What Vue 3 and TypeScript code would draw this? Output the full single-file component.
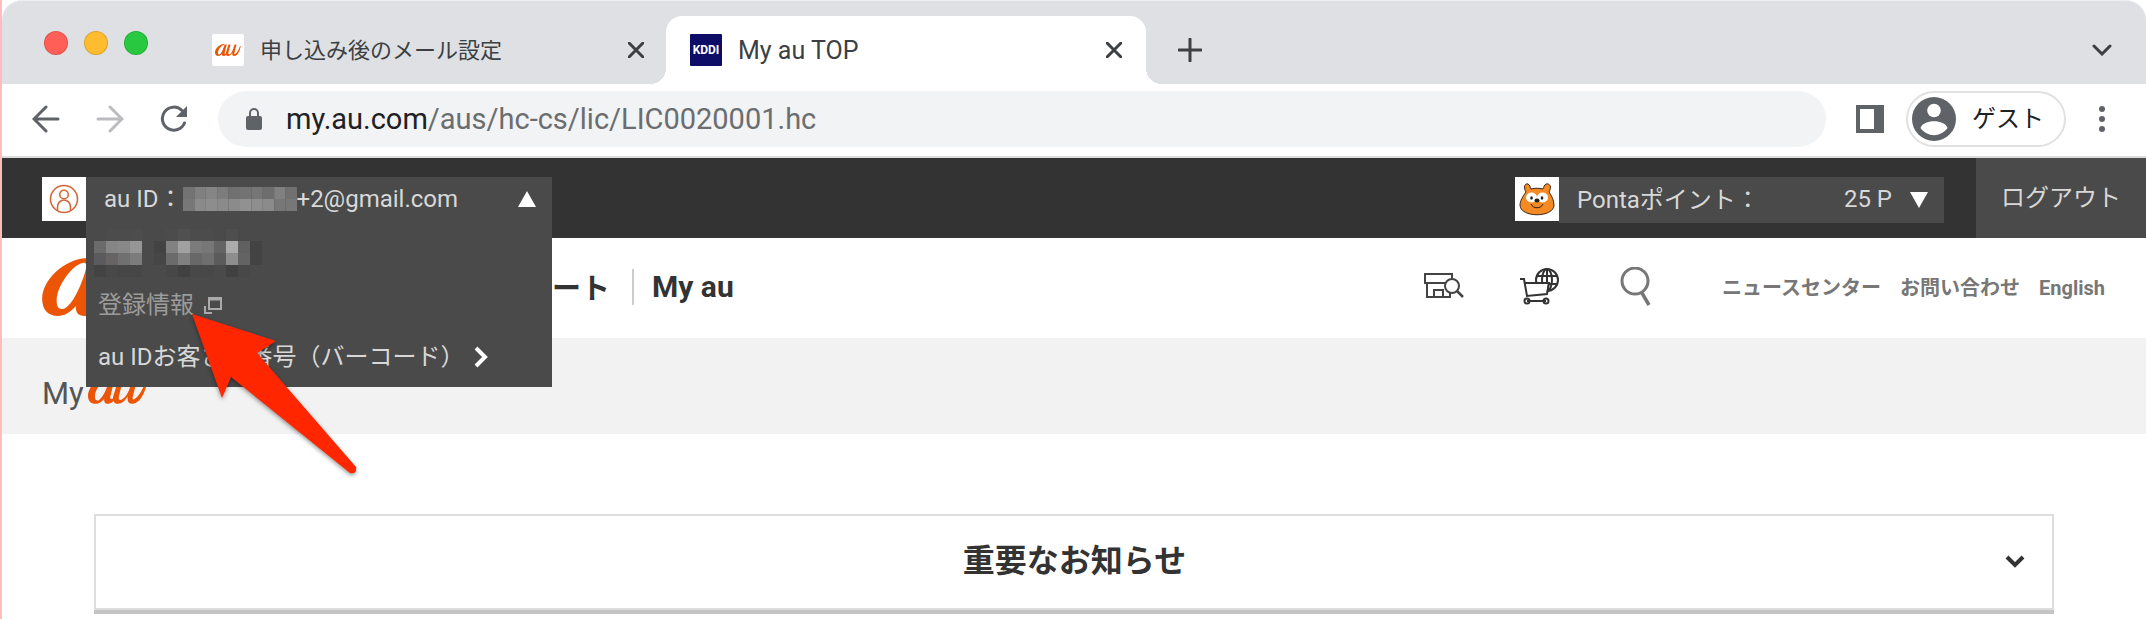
<script setup lang="ts">
import { ref } from 'vue'

const address = ref({ host: 'my.au.com', path: '/aus/hc-cs/lic/LIC0020001.hc' })
const links = ['ニュースセンター', 'お問い合わせ', 'English']

interface Mosaic { width: number; height: number; cells: string[] }
const mailMask: Mosaic = {
  width: 10,
  height: 2,
  cells: [
    '#737373', '#808080', '#858585', '#7c7c7c', '#707070', '#737373', '#767676', '#6d6d6d', '#808080', '#707070',
    '#777777', '#8a8a8a', '#8d8d8d', '#8b8b8b', '#8b8b8b', '#919191', '#8e8e8e', '#8b8b8b', '#777777', '#777777',
  ],
}
const nameMask: Mosaic = {
  width: 14,
  height: 4,
  cells: [
    '#4a4a4a', '#4c4c4c', '#4c4c4c', '#4d4d4d', '#4a4a4a', '#4a4a4a', '#4c4c4c', '#505050', '#4c4c4c', '#4c4c4c', '#4a4a4a', '#4e4e4e', '#4a4a4a', '#4a4a4a',
    '#6b6b6b', '#858585', '#888888', '#969696', '#4a4a4a', '#434343', '#828282', '#a0a0a0', '#7b7b7b', '#777777', '#646464', '#ababab', '#606060', '#434343',
    '#5b5b5d', '#676364', '#707070', '#7c7c7c', '#4a4a4a', '#464646', '#6b6b6b', '#808080', '#686868', '#6f6f6f', '#5b5b5b', '#8d8d8d', '#636363', '#434343',
    '#434343', '#484848', '#464646', '#464646', '#4a4a4a', '#4a4a4a', '#474747', '#414141', '#484848', '#484848', '#4a4a4a', '#414141', '#484848', '#4a4a4a',
  ],
}
const cell = (m: Mosaic, i: number) => ({ x: (i % m.width) * 12, y: Math.floor(i / m.width) * 12 })
</script>

<template>
  <div class="window">
    <header class="tabs">
      <div class="lights">
        <button class="light red" aria-label="閉じる"></button>
        <button class="light yellow" aria-label="最小化"></button>
        <button class="light green" aria-label="最大化"></button>
      </div>
      <div class="tab">
        <svg class="favicon" viewBox="0 0 32 32" aria-hidden="true">
          <rect width="32" height="32" rx="2" fill="#fff" />
          <g transform="translate(3 10) scale(.25)"><use href="#au-mark" /></g>
        </svg>
        <span class="tab-title">申し込み後のメール設定</span>
        <button class="icon-button" aria-label="タブを閉じる"><svg width="16" height="16" viewBox="0 0 16 16"><path d="M1 1l14 14M15 1L1 15" /></svg></button>
      </div>
      <div class="tab active">
        <span class="kddi">KDDI</span>
        <span class="tab-title">My au TOP</span>
        <button class="icon-button" aria-label="タブを閉じる"><svg width="16" height="16" viewBox="0 0 16 16"><path d="M1 1l14 14M15 1L1 15" /></svg></button>
      </div>
      <button class="icon-button plus" aria-label="新しいタブ"><svg width="24" height="24" viewBox="0 0 24 24"><path d="M12 1v22M1 12h22" /></svg></button>
      <button class="icon-button tab-search" aria-label="タブを検索"><svg width="20" height="12" viewBox="0 0 20 12"><path d="M2 2l8 8 8-8" /></svg></button>
    </header>

    <div class="toolbar">
      <button class="icon-button" aria-label="戻る"><svg width="28" height="28" viewBox="0 0 28 28"><path d="M26 14H3M14 2L2 14l12 12" /></svg></button>
      <button class="icon-button faded" aria-label="進む"><svg width="28" height="28" viewBox="0 0 28 28"><path d="M2 14h23M14 2l12 12-12 12" /></svg></button>
      <button class="icon-button" aria-label="再読み込み"><svg width="28" height="28" viewBox="0 0 28 28"><path d="M24.500 18A11.500 11.500 0 1 1 22 5.500" /><path class="solid" d="M27 1v11H16z" /></svg></button>
      <div class="omnibox">
        <svg width="16" height="22" viewBox="0 0 16 22" aria-hidden="true"><rect y="8" width="16" height="14" rx="2" fill="#5f6368" /><path d="M4 9V5a4 4 0 0 1 8 0v4" fill="none" stroke="#5f6368" stroke-width="2" /></svg>
        <a class="address" href="#"><b>{{ address.host }}</b>{{ address.path }}</a>
      </div>
      <button class="icon-button side-panel" aria-label="サイドパネル"><svg width="28" height="28" viewBox="0 0 28 28"><path class="solid" fill-rule="evenodd" d="M0 0h28v28H0zM4 4v20h14V4z" /></svg></button>
      <button class="profile">
        <svg width="44" height="44" viewBox="0 0 44 44" aria-hidden="true"><circle cx="22" cy="22" r="22" fill="#5f6368" /><circle cx="22" cy="13.500" r="6.800" fill="#fff" /><path d="M8.500 31C11 22 33 22 35.500 31 29 40.500 15 40.500 8.500 31z" fill="#fff" /></svg>
        ゲスト
      </button>
      <button class="icon-button menu" aria-label="メニュー"><svg width="6" height="28" viewBox="0 0 6 28"><circle cx="3" cy="4" r="3" /><circle cx="3" cy="14" r="3" /><circle cx="3" cy="24" r="3" /></svg></button>
    </div>

    <main class="page">
      <div class="account-bar">
        <div class="account">
          <svg class="square" viewBox="0 0 44 44" aria-hidden="true"><rect width="44" height="44" fill="#fff" /><g fill="none" stroke="#d4673a" stroke-width="1.600"><circle cx="22" cy="22" r="13.500" /><circle cx="22" cy="17.500" r="4.300" /><path d="M15.500 33.500v-3c0-10 13-10 13 0v3" /></g></svg>
          <div class="dropdown">
            <button class="row id-row">
              <span>au ID：</span>
              <svg width="114" height="24" viewBox="0 0 120 24" preserveAspectRatio="none" aria-hidden="true"><rect v-for="(c, i) in mailMask.cells" :key="i" :x="cell(mailMask, i).x" :y="cell(mailMask, i).y" width="12" height="12" :fill="c" /></svg>
              <span>+2@gmail.com</span>
              <svg class="toggle" width="18" height="16" viewBox="0 0 18 16" aria-hidden="true"><path d="M9 0l9 16H0z" fill="#fff" /></svg>
            </button>
            <div class="row name-row">
              <svg width="168" height="48" viewBox="0 0 168 48" aria-hidden="true"><rect v-for="(c, i) in nameMask.cells" :key="i" :x="cell(nameMask, i).x" :y="cell(nameMask, i).y" width="12" height="12" :fill="c" /></svg>
            </div>
            <a class="row muted" href="#">登録情報
              <svg width="18" height="18" viewBox="0 0 18 18" aria-hidden="true"><path d="M5 2h12v11H5zM5 3.500h12" fill="none" stroke="#aaa" stroke-width="2" /><path d="M1 10v7h7" fill="none" stroke="#aaa" stroke-width="2" /></svg>
            </a>
            <a class="row" href="#">au IDお客さま番号（バーコード）
              <svg width="16" height="22" viewBox="0 0 16 22" aria-hidden="true"><path d="M3 2l9 9-9 9" fill="none" stroke="#fff" stroke-width="4" /></svg>
            </a>
          </div>
        </div>
        <button class="ponta">
          <svg class="square" viewBox="0 0 44 44" aria-hidden="true">
            <rect width="44" height="44" fill="#fff" />
            <path d="M11 15C8 10 10 6 13 7c2 1 2 3 3 5 4-1 8-1 12 0 1-2 1-4 3-5 4-1 6 3 3 8 3 4 5 9 5 13 0 13-34 13-34 0 0-4 3-9 6-13z" fill="#f58a24" stroke="#3b281c" />
            <ellipse cx="16.500" cy="20.500" rx="5.500" ry="5" fill="#fff" /><ellipse cx="27.500" cy="20.500" rx="5.500" ry="5" fill="#fff" />
            <ellipse cx="16.500" cy="21" rx="1.300" ry="1.800" fill="#222" /><ellipse cx="27" cy="21" rx="1.300" ry="1.800" fill="#222" /><ellipse cx="22" cy="23.500" rx="2.500" ry="2" fill="#222" />
            <path d="M16 27c2 5 10 5 12 0" fill="none" stroke="#222" />
          </svg>
          <span class="ponta-body"><span class="ponta-label">Pontaポイント：</span><span class="points">25 P</span><svg width="18" height="16" viewBox="0 0 18 16" aria-hidden="true"><path d="M9 16L0 0h18z" fill="#fff" /></svg></span>
        </button>
        <a class="logout" href="#">ログアウト</a>
      </div>

      <nav class="site-nav">
        <svg class="logo" width="126" height="58" viewBox="0 0 104 48" aria-label="au" role="img">
          <defs>
            <g id="au-mark" fill="#eb5505">
              <path fill-rule="evenodd" d="M37 0C18 1 0 18 0 34c0 9 5 14 13 14 8 0 14-6 19-14l6-24zM35 4c3 0 1 8-2 15-4 11-10 21-15 23-5 1-6-2-6-7C12 23 26 4 35 4z" />
              <path d="M39 2h8l-8 32c-2 7 2 7 6 3l5-7 2 1c-5 10-10 17-17 17-8 0-8-7-6-14z" />
              <path d="M54 2h8l-8 31c-2 7 0 9 4 8 6-2 12-12 15-22l5-17h8l-8 32c-2 7 1 8 5 4 7-6 13-17 17-30l3 1c-4 20-13 39-26 39-8 0-9-6-8-13-5 8-10 13-17 13-8 0-10-7-8-14z" />
            </g>
          </defs>
          <use href="#au-mark" />
        </svg>
        <a class="support" href="#">サポート</a>
        <a class="current" href="#">My au</a>
        <div class="tools">
          <a href="#" aria-label="店舗検索"><svg width="40" height="40" viewBox="0 0 40 40"><g fill="none" stroke="#444" stroke-width="2"><path d="M1 7h27v9H1zM3 17v13h23V16M10 30v-7h9v7" /><circle cx="28" cy="19" r="7" fill="#fff" /><path d="M33 24l6 6" stroke-width="2.500" /></g></svg></a>
          <a href="#" aria-label="オンラインショップ"><svg width="40" height="40" viewBox="0 0 40 40"><g fill="none" stroke="#333" stroke-width="2"><circle cx="27" cy="13" r="11" /><ellipse cx="27" cy="13" rx="5" ry="11" /><path d="M27 2v22M17 9h20M17 17h20" /><path d="M5 16h23l-2 12H7z" fill="#fff" stroke="none" /><path d="M0 12h4l3 17 20-2 2-11H5M7 34h19" /><circle cx="7" cy="34" r="2.500" /><circle cx="26" cy="34" r="2.500" /></g></svg></a>
          <a href="#" aria-label="検索"><svg width="40" height="40" viewBox="0 0 40 40"><circle cx="19" cy="14" r="13" fill="none" stroke="#777" stroke-width="3" /><path d="M26 26l7 12" stroke="#777" stroke-width="3.500" /></svg></a>
        </div>
        <div class="links"><a v-for="link in links" :key="link" href="#">{{ link }}</a></div>
      </nav>

      <div class="breadcrumb">
        <span>My</span>
        <svg width="60" height="28" viewBox="0 0 104 48" aria-label="au" role="img"><use href="#au-mark" /></svg>
      </div>

      <section class="notice">
        <button class="notice-toggle">
          <span>重要なお知らせ</span>
          <svg width="20" height="14" viewBox="0 0 20 14" aria-hidden="true"><path d="M2 2l8 8 8-8" fill="none" stroke="#333" stroke-width="4" /></svg>
        </button>
      </section>
    </main>

    <svg class="pointer" width="180" height="170" viewBox="0 0 180 170" aria-hidden="true">
      <path d="M6 4L90 31 71 43 170 157Q171 164 164 163L45 67 36 88z" fill="#ff2600" />
    </svg>
  </div>
</template>

<style>
body { margin: 0; background: #fff; }
</style>

<style scoped>
* { box-sizing: border-box; }
.window { position: relative; min-height: 100vh; border-left: 2px solid #ffbdbd; font-family: Roboto, "Noto Sans CJK JP", sans-serif; color: #333; }
button { margin: 0; padding: 0; border: 0; background: none; font: inherit; color: inherit; }
a { color: inherit; text-decoration: none; }
svg { display: block; flex: none; }
.icon-button { display: grid; place-items: center; flex: none; }
.icon-button svg { fill: none; stroke: #5f6368; stroke-width: 3; stroke-linecap: round; }
.icon-button .solid { fill: #5f6368; stroke: none; }

.tabs { display: flex; align-items: flex-end; height: 84px; background: #dee0e4; border-top: 1px solid #eeeff2; border-radius: 20px 20px 0 0; }
.tabs .icon-button svg { stroke: #3c4043; }
.lights { display: flex; gap: 16px; width: 190px; padding-left: 42px; align-self: center; }
.light { width: 24px; height: 24px; border-radius: 50%; border: 1px solid #0002; }
.red { background: #ff5f57; }
.yellow { background: #febc2e; }
.green { background: #28c840; }
.tab { display: flex; align-items: center; width: 474px; height: 68px; padding: 0 22px 0 20px; color: #3c4043; font-size: 22px; }
.tab.active { position: relative; width: 480px; padding: 0 24px; background: #fff; border-radius: 16px 16px 0 0; font-size: 25px; }
.tab.active::before, .tab.active::after { content: ""; position: absolute; bottom: 0; width: 16px; height: 16px; }
.tab.active::before { right: 100%; background: radial-gradient(circle at 0 0, transparent 16px, #fff 16px); }
.tab.active::after { left: 100%; background: radial-gradient(circle at 100% 0, transparent 16px, #fff 16px); }
.favicon { width: 32px; height: 32px; }
.tab-title { flex: 1; margin-left: 16px; padding-bottom: 4px; white-space: nowrap; }
.active .tab-title { padding-bottom: 0; }
.kddi { display: grid; place-items: center; width: 32px; height: 32px; background: #0d0d68; color: #fff; font-size: 12px; font-weight: 700; border-radius: 1px; }
.plus { margin: 0 0 22px 32px; }
.tab-search { margin: 0 34px 28px auto; }

.toolbar { display: flex; align-items: center; height: 74px; padding: 0 41px 2px 30px; border-bottom: 2px solid #dcdcde; background: #fff; }
.toolbar .icon-button { width: 28px; margin-right: 36px; }
.toolbar .faded svg { stroke: #bbbcbf; }
.toolbar .icon-button:nth-of-type(3) { margin-right: 30px; }
.omnibox { display: flex; flex: 1; align-items: center; gap: 24px; height: 56px; padding-left: 28px; border-radius: 28px; background: #f1f3f4; font-size: 29px; }
.address { color: #6b6d70; }
.address b { color: #202124; font-weight: 400; }
.toolbar .side-panel { margin: 0 22px 0 30px; }
.profile { display: flex; align-items: center; gap: 16px; width: 160px; height: 56px; padding-left: 4px; border: 2px solid #e1e1e3; border-radius: 28px; color: #202124; font-size: 24px; line-height: 32px; white-space: nowrap; }
.toolbar .menu { width: 6px; margin: 0 0 0 33px; }
.menu svg { fill: #5f6368; stroke: none; }

.account-bar { display: flex; align-items: flex-start; height: 80px; padding-left: 40px; background: #333; color: #d8d8d8; font-size: 24px; }
.account { position: relative; margin-top: 19px; }
.square { width: 44px; height: 44px; }
.dropdown { position: absolute; z-index: 2; top: 0; left: 44px; width: 466px; padding-bottom: 4px; background: #4a4a4a; }
.row { display: flex; align-items: center; width: 100%; height: 52px; padding-left: 12px; white-space: nowrap; line-height: 32px; }
.id-row { height: 44px; margin-bottom: 6px; padding: 0 16px 0 18px; }
.id-row .toggle { margin-left: auto; }
.name-row { padding-left: 8px; }
.muted { gap: 10px; color: #9c9c9c; }
.row:last-child { gap: 8px; }
.ponta { display: flex; width: 429px; margin: 19px 32px 0 auto; text-align: left; }
.ponta-body { display: flex; flex: 1; align-items: center; height: 46px; padding: 0 16px 0 18px; background: #4a4a4a; }
.ponta-label { padding-bottom: 6px; }
.points { margin: 0 18px 0 auto; padding-bottom: 2px; }
.logout { display: grid; place-items: center; width: 170px; height: 80px; padding-bottom: 6px; background: #4a4a4a; }

.site-nav { display: flex; align-items: center; height: 100px; padding: 0 41px 2px 40px; background: #fff; }
.support { width: 442px; padding-bottom: 2px; font-size: 29px; font-weight: 700; text-align: right; }
.current { margin-left: 22px; padding-left: 18px; border-left: 2px solid #ccc; font-size: 30px; font-weight: 700; line-height: 36px; }
.tools { display: flex; gap: 56px; margin: 0 66px 0 auto; }
.links { display: flex; align-items: baseline; gap: 19px; padding-bottom: 2px; color: #777; font-size: 20px; font-weight: 700; white-space: nowrap; }

.breadcrumb { display: flex; align-items: flex-end; gap: 4px; height: 96px; padding: 0 42px 24px 40px; background: #f2f2f2; color: #555; font-size: 31px; line-height: 32px; }
.breadcrumb svg { margin-bottom: 6px; }
.notice { margin: 80px 92px 0; border-bottom: 4px solid #c4c4c4; }
.notice-toggle { display: flex; align-items: center; width: 100%; height: 96px; padding: 0 27px 0 48px; border: 2px solid #ddd; font-size: 32px; font-weight: 700; }
.notice-toggle span { flex: 1; padding-bottom: 8px; }
.pointer { position: absolute; z-index: 3; left: 184px; top: 310px; filter: drop-shadow(0 2px 2px #0006); }
</style>
